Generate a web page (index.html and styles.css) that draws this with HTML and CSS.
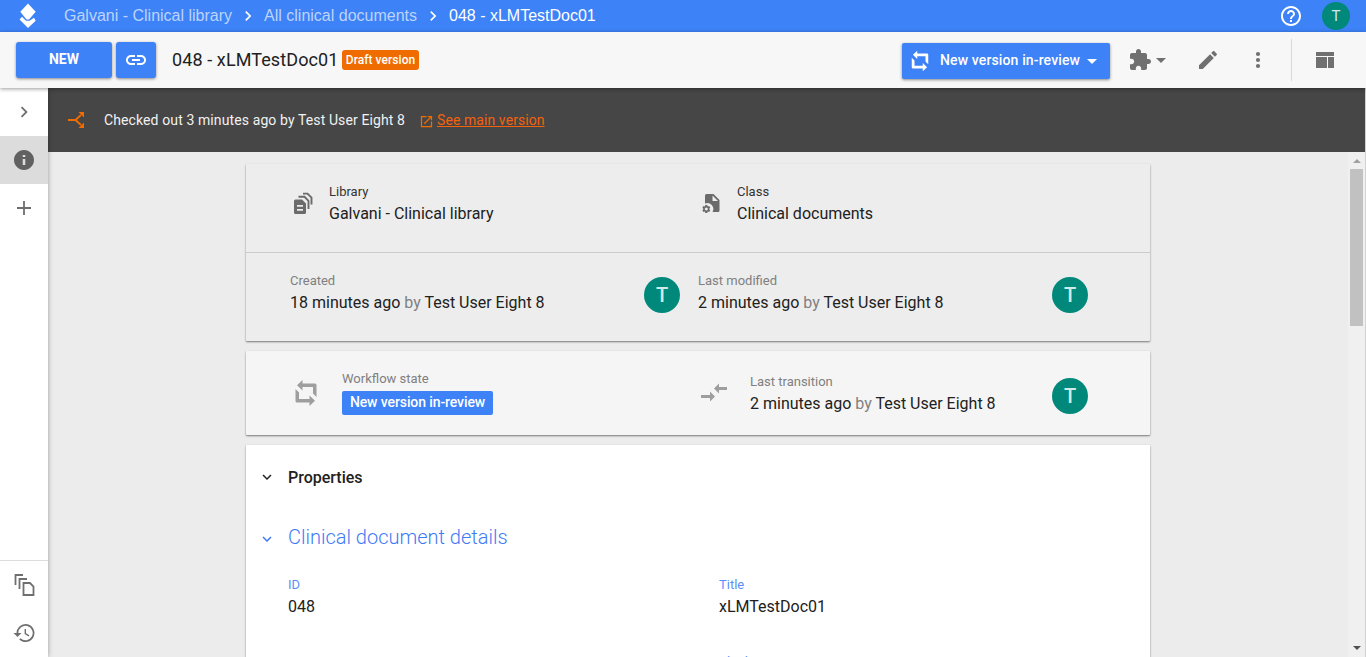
FILE: index.html
```html
<!DOCTYPE html>
<html lang="en">
<head>
<meta charset="utf-8">
<title>048 - xLMTestDoc01</title>
<link rel="stylesheet" href="styles.css">
</head>
<body>
<svg class="defs" aria-hidden="true">
  <symbol id="chev-right" viewBox="0 0 24 24"><path d="M8.6 16.6 13.2 12 8.6 7.4 10 6l6 6-6 6z"/></symbol>
  <symbol id="chev-down" viewBox="0 0 24 24"><path d="M7.4 8.6 12 13.2l4.6-4.6L18 10l-6 6-6-6z"/></symbol>
  <symbol id="loop" viewBox="0 0 24 28"><path d="M8.500 1v3.500H21Q22.500 4.500 22.500 6v12l-3.500-3.500V8H8.500v3.500L3 6.200zM15.500 27v-3.500H3Q1.500 23.500 1.500 22V10L5 13.500V20h10.500v-3.500l5.500 5.300z"/></symbol>
</svg>
<header class="topbar">
  <svg class="logo" viewBox="0 0 18 26"><path d="M9 .5l7.700 8.300-6.700 7.700H7.500L1.300 8.800z"/><path d="M3 13.800.6 16.500 9 25l7.700-7.200-1.700-3.100-4.500 3H7z"/></svg>
  <nav class="crumbs">
    <a>Galvani - Clinical library</a><svg class="sep"><use href="#chev-right"/></svg><a>All clinical documents</a><svg class="sep"><use href="#chev-right"/></svg><a class="current">048 - xLMTestDoc01</a>
  </nav>
  <svg class="help" viewBox="0 0 24 24"><path d="M11 18h2v-2h-2v2zm1-16C6.480 2 2 6.480 2 12s4.480 10 10 10 10-4.480 10-10S17.520 2 12 2zm0 18c-4.410 0-8-3.590-8-8s3.590-8 8-8 8 3.590 8 8-3.590 8-8 8zm0-14c-2.210 0-4 1.790-4 4h2c0-1.100.9-2 2-2s2 .9 2 2c0 2-3 1.750-3 5h2c0-2.250 3-2.500 3-5 0-2.210-1.790-4-4-4z"/></svg>
  <span class="avatar small">T</span>
</header>
<div class="toolbar">
  <button class="btn new">NEW</button>
  <button class="btn link"><svg viewBox="0 0 24 24"><path d="M3.900 12c0-1.710 1.390-3.100 3.100-3.100h4V7H7c-2.760 0-5 2.240-5 5s2.240 5 5 5h4v-1.900H7c-1.710 0-3.100-1.390-3.100-3.100zM8 13h8v-2H8v2zm9-6h-4v1.900h4c1.710 0 3.100 1.390 3.100 3.100s-1.390 3.100-3.100 3.100h-4V17h4c2.760 0 5-2.240 5-5s-2.240-5-5-5z"/></svg></button>
  <h1 class="title">048 - xLMTestDoc01</h1>
  <span class="draft">Draft version</span>
  <button class="btn state"><svg class="loop"><use href="#loop"/></svg><span>New version in-review</span><i class="caret"></i></button>
  <div class="tools">
    <svg class="puzzle" viewBox="0 0 24 24"><path d="M20.500 11H19V7c0-1.100-.9-2-2-2h-4V3.500C13 2.120 11.880 1 10.500 1S8 2.120 8 3.500V5H4c-1.100 0-1.990.9-1.990 2v3.800H3.500c1.490 0 2.700 1.210 2.700 2.700s-1.210 2.700-2.700 2.700H2V20c0 1.100.9 2 2 2h3.800v-1.500c0-1.490 1.210-2.700 2.700-2.700s2.700 1.210 2.700 2.700V22H17c1.100 0 2-.9 2-2v-4h1.500c1.380 0 2.500-1.120 2.500-2.500S21.880 11 20.500 11z"/></svg>
    <i class="caret"></i>
    <svg class="pencil" viewBox="0 0 24 24"><path d="M3 17.250V21h3.750L17.810 9.940l-3.750-3.750L3 17.250zM20.710 7.040c.39-.39.39-1.020 0-1.410l-2.340-2.340c-.39-.39-1.020-.39-1.410 0l-1.830 1.830 3.750 3.750 1.830-1.830z"/></svg>
    <svg class="more" viewBox="0 0 24 24"><circle cx="12" cy="6" r="2.100"/><circle cx="12" cy="12" r="2.100"/><circle cx="12" cy="18" r="2.100"/></svg>
  </div>
  <div class="layout-tool"><svg viewBox="0 0 18 16"><path d="M0 0h18v4H0zM0 5h11v11H0zM12 5h6v11h-6z"/></svg></div>
</div>
<div class="body">
  <aside class="side">
    <div class="side-item"><svg><use href="#chev-right"/></svg></div>
    <div class="side-item active"><svg viewBox="0 0 24 24"><path d="M12 2C6.480 2 2 6.480 2 12s4.480 10 10 10 10-4.480 10-10S17.520 2 12 2zm1.300 15h-2.600v-6h2.600v6zm0-8h-2.600V7h2.600v2z"/></svg></div>
    <div class="side-item"><svg viewBox="0 0 24 24"><path d="M19 12.900h-6.100V19h-1.800v-6.100H5v-1.800h6.100V5h1.800v6.100H19z"/></svg></div>
    <div class="side-bottom">
      <div class="side-item"><svg class="copies" viewBox="0 0 24 24"><path d="M3.500 12V2H11M7.500 16V6H15"/><path d="M11.500 10h6.500l3.500 3.500V22h-10z"/></svg></div>
      <div class="side-item"><svg class="hist" viewBox="0 0 24 24"><path d="M13.500 3a9 9 0 0 0-9 9H1.500l4 4 4-4H6.300a7.200 7.200 0 1 1 2.200 5.200l-1.300 1.300A9 9 0 1 0 13.500 3zM12.600 8v5l4.100 2.500.7-1.200-3.400-2V8z"/></svg></div>
    </div>
  </aside>
  <main class="main">
    <div class="notice">
      <svg class="branch" viewBox="0 0 18 18"><path d="M1 9h7.500L14 4M8.500 9l5.500 5" fill="none" stroke="currentColor" stroke-width="1.900"/><path d="M11.500 1H17v5.500zM11.500 17H17v-5.500z"/></svg>
      <span class="notice-text">Checked out 3 minutes ago by Test User Eight 8</span>
      <svg class="open" viewBox="0 0 24 24"><path d="M19 19H5V5h7V3H3v18h18v-9h-2v7zM14 3v2h3.590l-9.830 9.830 1.410 1.410L19 6.410V10h2V3h-7z"/></svg>
      <a class="see">See main version</a>
    </div>
    <div class="scroll">
      <div class="content">
        <section class="card info">
          <div class="row first">
            <div class="cell"><svg class="icon lib" viewBox="0 0 20 22"><path d="M1 9Q1 7.500 2.500 7.500H9l4 4V20.500Q13 22 11.500 22H2.500Q1 22 1 20.500zM4 13v1.700h6V13zm0 4v1.700h6V17z" fill-rule="evenodd"/><path d="M5.500 4.800h6l4 4V17M10 1.600h4.500l4 4V12.500" fill="none" stroke="currentColor" stroke-width="1.900"/></svg>
              <div><div class="label dark">Library</div><div class="value">Galvani - Clinical library</div></div></div>
            <div class="cell"><svg class="icon cls" viewBox="0 0 20 22"><path d="M4 2.500Q4 1 5.500 1H12.500L18.500 7V17.500Q18.500 19 17 19H11.500A6 6 0 0 0 4 10.500zM11.500 2.500V8H17z" fill-rule="evenodd"/><path d="M4.300 12h2l.4 1.600 1.500-.5 1 1.700-1.100 1.200 1.100 1.200-1 1.700-1.500-.5-.4 1.700h-2l-.4-1.700-1.500.5-1-1.700 1.100-1.200-1.100-1.200 1-1.700 1.500.5zM5.300 14.600a1.500 1.500 0 1 0 .01 0z" fill-rule="evenodd"/></svg>
              <div><div class="label dark">Class</div><div class="value">Clinical documents</div></div></div>
          </div>
          <div class="row second">
            <div class="cell"><div><div class="label">Created</div><div class="value">18 minutes ago <em>by</em> Test User Eight 8</div></div><span class="avatar">T</span></div>
            <div class="cell"><div><div class="label">Last modified</div><div class="value">2 minutes ago <em>by</em> Test User Eight 8</div></div><span class="avatar">T</span></div>
          </div>
        </section>
        <section class="card flow">
          <div class="cell"><svg class="wf"><use href="#loop"/></svg><div class="wf-text"><div class="label">Workflow state</div><span class="chip">New version in-review</span></div></div>
          <div class="cell"><svg class="trans" viewBox="0 0 28 20"><path d="M1 12h9V8.500l5 5-5 5V15H1zM27 4h-8V.5l-5 5 5 5V7h8z"/></svg><div class="tr-text"><div class="label">Last transition</div><div class="value">2 minutes ago <em>by</em> Test User Eight 8</div></div><span class="avatar">T</span></div>
        </section>
        <section class="card props">
          <h2 class="props-head"><svg><use href="#chev-down"/></svg><span>Properties</span></h2>
          <h3 class="group-head"><svg><use href="#chev-down"/></svg><span>Clinical document details</span></h3>
          <div class="fields">
            <div><div class="label blue">ID</div><div class="value">048</div></div>
            <div><div class="label blue">Title</div><div class="value">xLMTestDoc01</div></div>
            <div></div>
            <div><div class="label blue">Blinding</div></div>
          </div>
        </section>
      </div>
      <div class="scrollbar"><i class="up"></i><div class="thumb"></div><i class="down"></i></div>
    </div>
  </main>
</div>
</body>
</html>
```

FILE: styles.css
```css
* { box-sizing: border-box; }
body { margin: 0; width: 1366px; height: 657px; overflow: hidden; display: flex; flex-direction: column; font-family: Roboto, sans-serif; color: #212121; background: #ececec; }
svg { fill: currentColor; flex: none; display: block; }
.defs { position: absolute; width: 0; height: 0; }
h1, h2, h3 { margin: 0; font-weight: 400; }
em { font-style: normal; color: #808080; }

.topbar { flex: none; height: 32px; background: #3d82f7; color: #fff; display: flex; align-items: center; padding: 0 16px 0 19px; }
.logo { width: 18px; height: 26px; margin-top: -1px; }
.crumbs { display: flex; align-items: center; margin-left: 27px; flex: 1; font: 16px "Liberation Sans", Arial, sans-serif; color: #bcd4fc; }
.crumbs .current { color: #fff; }
.sep { width: 20px; height: 20px; margin: 0 6px; color: #fff; }
.help { width: 24px; height: 24px; margin-right: 19px; }
.avatar { width: 36px; height: 36px; border-radius: 50%; background: #00897b; color: #d0ebe7; display: flex; align-items: center; justify-content: center; font-size: 20px; font-weight: 500; flex: none; }
.avatar.small { width: 28px; height: 28px; font-size: 15px; font-weight: 400; }

.toolbar { flex: none; height: 56px; background: #f7f7f7; display: flex; align-items: center; padding-left: 16px; position: relative; z-index: 2; box-shadow: 0 1px 4px rgba(0,0,0,.4); }
.btn { border: 0; padding: 0; height: 36px; border-radius: 3px; background: #3d82f7; color: #fff; font: 500 14px Roboto, sans-serif; box-shadow: 0 1px 3px rgba(0,0,0,.45); display: flex; align-items: center; justify-content: center; }
.new { width: 96px; margin-right: 4px; padding-bottom: 2px; font-weight: 700; }
.link { width: 40px; }
.link svg { width: 24px; height: 24px; }
.title { font-size: 18px; margin-left: 16px; letter-spacing: .1px; width: 166px; white-space: nowrap; padding-bottom: 2px; }
.draft { margin-left: 4px; width: 77px; height: 20px; border-radius: 3px; background: #ef6c00; color: #fff; font-size: 12px; font-weight: 500; letter-spacing: .05px; display: flex; align-items: center; justify-content: center; }
.state { width: 208px; height: 36px; margin: 2px 0 0 auto; border-radius: 2px; justify-content: flex-start; padding-left: 8px; }
.state span { margin-left: 10px; width: 142px; text-align: left; white-space: nowrap; letter-spacing: .13px; padding-bottom: 2px; }
.loop { width: 20px; height: 22px; }
.caret { border: 5px solid transparent; border-top-color: currentColor; border-bottom: 0; margin-left: 5px; }
.tools { display: flex; align-items: center; color: #707070; width: 181px; padding-left: 18px; }
.puzzle { width: 24px; height: 24px; }
.tools .caret { margin-left: 4px; }
.pencil { width: 24px; height: 24px; margin-left: 30px; }
.more { width: 24px; height: 24px; margin-left: 26px; }
.layout-tool { width: 75px; height: 42px; border-left: 1px solid #d9d9d9; color: #707070; display: flex; align-items: center; padding-left: 24px; }
.layout-tool svg { width: 18px; height: 16px; }

.body { flex: 1; min-height: 0; display: flex; }
.side { width: 48px; background: #fff; display: flex; flex-direction: column; position: relative; z-index: 1; box-shadow: 0 0 5px rgba(0,0,0,.35); color: #6f6f6f; }
.side-item { height: 48px; display: flex; align-items: center; justify-content: center; flex: none; }
.side-item svg { width: 24px; height: 24px; }
.side-item:first-child > svg { width: 22px; height: 22px; }
.active { background: #dcdcdc; }
.active svg { color: #616161; }
.side-bottom { margin-top: auto; border-top: 1px solid #ddd; }
.side-bottom .side-item .copies { width: 24px; height: 24px; fill: none; stroke: currentColor; stroke-width: 1.8; }
.main { flex: 1; min-width: 0; display: flex; flex-direction: column; border-right: 1px solid #d2d2d2; }
.notice { flex: none; height: 64px; background: #464646; color: #fff; display: flex; align-items: center; font-size: 14px; padding-left: 19px; white-space: nowrap; letter-spacing: .11px; }
.branch { width: 18px; height: 18px; color: #ef6c00; }
.notice-text { margin-left: 19px; width: 301px; color: #f1f1f1; }
.open { width: 15px; height: 15px; margin: 2px 0 0 14px; color: #ef6c00; }
.see { color: #f4620c; text-decoration: underline; margin-left: 3px; letter-spacing: .08px; }
.scroll { flex: 1; min-height: 0; display: flex; overflow: hidden; }
.content { flex: 1; padding: 12px 198px 0; display: flex; flex-direction: column; gap: 10px; }
.card { width: 904px; flex: none; box-shadow: 0 1px 2px rgba(0,0,0,.5); border-radius: 1px; }
.info { background: #ededed; height: 177px; }
.row { display: flex; padding-left: 44px; }
.first { height: 89px; border-bottom: 1px solid #ccc; padding-top: 20px; }
.second { padding-top: 20px; }
.cell { width: 408px; display: flex; align-items: flex-start; }
.label { font-size: 13px; line-height: 16px; color: #808080; }
.label.dark { color: #333; }
.label.blue { color: #5b8ffa; }
.value { font-size: 16px; line-height: 20px; margin-top: 4px; white-space: nowrap; }
.icon { width: 20px; height: 22px; margin: 8px 16px 0 3px; color: #6b6b6b; }
.icon.cls { margin-top: 9px; }
.avatar { margin-left: auto; }
.second .avatar { margin: 4px 18px 0 auto; }
.flow { background: #f5f5f5; height: 84px; display: flex; padding-left: 44px; }
.wf { width: 24px; height: 28px; margin: 28px 24px 0 4px; color: #9e9e9e; }
.wf-text { padding-top: 20px; }
.chip { display: block; margin-top: 4px; width: 151px; height: 24px; line-height: 23px; border-radius: 2px; background: #3d82f7; color: #fff; text-align: center; font-size: 14px; font-weight: 500; letter-spacing: -.1px; white-space: nowrap; }
.trans { width: 28px; height: 20px; margin: 32px 22px 0 2px; color: #9e9e9e; }
.tr-text { padding-top: 23px; }
.flow .avatar { margin: 27px 18px 0 auto; }
.props { background: #fff; height: 400px; }
.props-head { font-size: 16px; font-weight: 500; line-height: 24px; padding: 20px 0 0 12px; display: flex; align-items: center; }
.props-head span { padding-top: 1px; margin-bottom: -1px; }
.props-head svg, .group-head svg { width: 18px; height: 18px; margin-right: 12px; }
.group-head { font-size: 20px; font-weight: 300; line-height: 28px; color: #3f7af5; display: flex; align-items: center; padding: 34px 0 0 12px; }
.group-head svg { margin-top: 3px; }
.fields { display: grid; grid-template-columns: 431px 431px; row-gap: 37px; padding: 26px 0 0 42px; }
.scrollbar { width: 17px; background: #f0f0f0; display: flex; flex-direction: column; align-items: center; padding: 7px 0 7px; }
.up { border: 4px solid transparent; border-bottom-color: #a0a0a0; border-top: 0; }
.thumb { width: 13px; height: 157px; background: #c1c1c1; margin: 6px 0 auto; }
.down { border: 4px solid transparent; border-top-color: #505050; border-bottom: 0; }
```
